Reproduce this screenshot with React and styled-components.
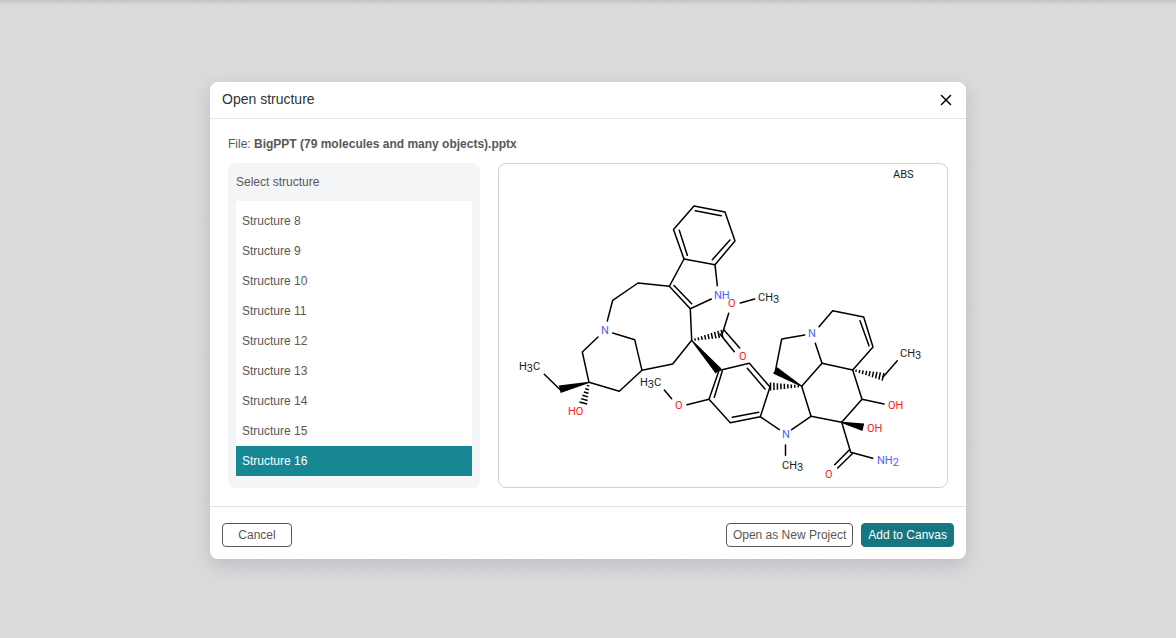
import React, { useState } from "react";
import styled, { createGlobalStyle, css } from "styled-components";

const GlobalStyle = createGlobalStyle`
  *, *::before, *::after { box-sizing: border-box; }
  body {
    margin: 0;
    font-family: "Liberation Sans", Arial, sans-serif;
    font-size: 12px;
    color: #585858;
  }
`;

const Backdrop = styled.main`
  min-height: 100vh;
  padding: 3px 16px 0;
  display: flex;
  align-items: center;
  justify-content: center;
  background:
    linear-gradient(to bottom, rgba(0, 0, 0, 0.1), rgba(0, 0, 0, 0) 6px),
    repeating-linear-gradient(135deg, #dcdcdc 0 5px, #dadada 5px 6px);
`;

const Dialog = styled.section`
  width: 100%;
  max-width: 756px;
  background: #fff;
  border-radius: 8px;
  box-shadow: 0 6px 20px rgba(103, 104, 132, 0.28);
`;

const Header = styled.header`
  display: flex;
  align-items: center;
  justify-content: space-between;
  height: 37px;
  padding: 0 12px 2px;
  border-bottom: 1px solid #e1e5ea;
`;

const Title = styled.h1`
  margin: 0;
  font-size: 14px;
  line-height: 20px;
  font-weight: 400;
  color: #333;
`;

const CloseButton = styled.button`
  display: flex;
  padding: 2px 0 0;
  border: 0;
  background: none;
  color: #000;
  cursor: pointer;
`;

const Body = styled.div`
  padding: 16px 18px 18px;
`;

const FileName = styled.p`
  margin: 0 0 10px;
  line-height: 18px;
`;

const Columns = styled.div`
  display: grid;
  grid-template-columns: 252px minmax(0, 1fr);
  gap: 18px;
`;

const ListPanel = styled.div`
  padding: 10px 8px 12px;
  background: #f4f5f7;
  border-radius: 8px;
`;

const ListTitle = styled.h2`
  margin: 0 0 10px;
  font-size: 12px;
  line-height: 18px;
  font-weight: 400;
`;

const List = styled.ul`
  margin: 0;
  padding: 5px 0 0;
  list-style: none;
  background: #fff;
`;

const ListButton = styled.button`
  display: block;
  width: 100%;
  height: 30px;
  padding: 0 6px;
  border: 0;
  font: inherit;
  text-align: left;
  cursor: pointer;
  color: ${(p) => (p.$selected ? "#fff" : "#585858")};
  background: ${(p) => (p.$selected ? "#188794" : "transparent")};
`;

const Preview = styled.div`
  display: flex;
  border: 1px solid #cad3dd;
  border-radius: 8px;
`;

const Drawing = styled.svg`
  display: block;
  width: 100%;
  height: 323px;
`;

const AtomText = styled.text`
  font-family: Roboto, "Liberation Sans", sans-serif;
  font-size: 11px;
  fill: ${(p) => p.$color};
`;

const Footer = styled.footer`
  display: flex;
  gap: 8px;
  padding: 16px 12px 12px;
  border-top: 1px solid #e1e5ea;
`;

const Button = styled.button`
  height: 24px;
  padding: 0 6px;
  border: 1px solid #585858;
  border-radius: 4px;
  font: inherit;
  color: #585858;
  background: #fff;
  cursor: pointer;
  ${(p) => p.$wide && css`
    min-width: 70px;
    margin-right: auto;
  `}
  ${(p) => p.$primary && css`
    border-color: #167782;
    color: #fff;
    background: #167782;
  `}
`;

const NITROGEN = "#4a63f8";
const OXYGEN = "#ff1a1a";
const CARBON = "#1c1c1c";

const bonds = [
  // indole
  "M185 95L174.500 65.500L195 42L226 48L236 77L216 100.700Z",
  "M180.300 66.200L188.300 91.200M196.300 46.700L222.300 51.700M231 76L213.300 95.700",
  "M185 95L170.300 122.300L191.300 144.700L212.300 135M218.300 121.700L216 100.700",
  "M175 121.500L192.700 139.700",
  // bridged piperidine
  "M170.300 122.300L139 119L113.700 136.300L108.300 157",
  "M113.700 169L135.700 175.700L143 206.300L120.300 227.300L90 218.300L83.300 188L99 173",
  "M143 206.300L173.700 200L192.700 176.300L191.300 144.700",
  "M60.700 225.300L45.300 210.300",
  // methyl ester
  "M223.300 169.700L229.700 149.300M241.300 139L255.700 135M225 166L240.700 184M221 170L235.300 187.700",
  // dihydroindole
  "M220 206.500L250.300 199.300L271 223L261.300 252.700L231.300 258.700L210 235.300Z",
  "M223.300 207L215.300 233.300M248.300 204.300L266 225M259.700 248.300L233.300 253.300",
  "M210 235.300L188 240.700M172.700 234.700L165.300 226",
  "M261.300 252.700L280.300 265.700M292.700 265.700L312 252.300L302.700 222.300M286.500 281V291.300",
  // fused rings
  "M276.500 206.300L282.700 175L305.700 171M316.300 179.300L323 199.300L302.700 222.300",
  "M320 162.700L333.700 146.700L364.700 153L374 183L353.700 206L323 199.300M361 156.700L370 181.700",
  "M353.700 206L363 235.300L342.700 258.300L312 252.300M363 235.300L385 240",
  "M384.300 212.700L398.300 196.700",
  // amide
  "M342.700 258.300L351.700 288.300L373.700 294.300M350 286.300L335.700 300.700M353.300 289.700L338.700 304",
];

// [tip x, tip y, base x, base y]
const wedges = [
  [90, 218.3, 60.7, 225.3],
  [192.7, 176.3, 219.5, 207],
  [302.7, 222.3, 276, 206.3],
  [342.7, 258.3, 364.3, 263.3],
];

const hashes = [
  [90, 218.3, 84.3, 239],
  [192.7, 176.3, 223, 169.7],
  [302.7, 222.3, 271.5, 222.5],
  [353.7, 206, 384, 212.7],
];

function spread([x1, y1, x2, y2], t, half) {
  const length = Math.hypot(x2 - x1, y2 - y1);
  const nx = (-(y2 - y1) / length) * half;
  const ny = ((x2 - x1) / length) * half;
  const x = x1 + (x2 - x1) * t;
  const y = y1 + (y2 - y1) * t;
  return [`${x + nx} ${y + ny}`, `${x - nx} ${y - ny}`];
}

function wedgePath(w) {
  const [a, b] = spread(w, 0, 0.6);
  const [c, d] = spread(w, 1, 3.8);
  return `M${a}L${c}L${d}L${b}Z`;
}

function hashPath(h) {
  const count = Math.round(Math.hypot(h[2] - h[0], h[3] - h[1]) / 3.5);
  return Array.from({ length: count }, (_, i) => {
    const t = (i + 1) / count;
    const [a, b] = spread(h, t, 0.8 + 3.2 * t);
    return `M${a}L${b}`;
  }).join("");
}

const labels = [
  { x: 394, y: 14, text: "ABS" },
  { x: 215, y: 135, text: "NH", color: NITROGEN },
  { x: 229, y: 143, text: "O", color: OXYGEN },
  { x: 259, y: 137, text: "CH", sub: "3" },
  { x: 102, y: 170, text: "N", color: NITROGEN },
  { x: 240, y: 196, text: "O", color: OXYGEN },
  { x: 20, y: 206, text: "H", sub: "3", tail: "C" },
  { x: 69, y: 251, text: "HO", color: OXYGEN },
  { x: 141, y: 222, text: "H", sub: "3", tail: "C" },
  { x: 176, y: 245, text: "O", color: OXYGEN },
  { x: 309, y: 173, text: "N", color: NITROGEN },
  { x: 401, y: 193, text: "CH", sub: "3" },
  { x: 389, y: 245, text: "OH", color: OXYGEN },
  { x: 368, y: 268, text: "OH", color: OXYGEN },
  { x: 283, y: 274, text: "N", color: NITROGEN },
  { x: 283, y: 305, text: "CH", sub: "3" },
  { x: 378, y: 300, text: "NH", sub: "2", color: NITROGEN },
  { x: 326, y: 314, text: "O", color: OXYGEN },
];

function Molecule() {
  return (
    <Drawing viewBox="0 0 448 323" role="img" aria-label="Structure preview">
      <g fill="none" stroke="#000" strokeWidth="1.5" strokeLinecap="round" strokeLinejoin="round">
        {bonds.map((d) => <path key={d} d={d} />)}
      </g>
      {wedges.map((w) => <path key={w.join()} d={wedgePath(w)} />)}
      {hashes.map((h) => <path key={h.join()} d={hashPath(h)} stroke="#000" strokeWidth="1.5" />)}
      {labels.map(({ x, y, text, sub, tail, color = CARBON }) => (
        <AtomText key={`${x}-${y}`} x={x} y={y} $color={color}>
          {text}
          {sub && <tspan dy="2">{sub}</tspan>}
          {tail && <tspan dy="-2">{tail}</tspan>}
        </AtomText>
      ))}
    </Drawing>
  );
}

const structures = [8, 9, 10, 11, 12, 13, 14, 15, 16];

export default function App() {
  const [selected, setSelected] = useState(16);
  return (
    <>
      <GlobalStyle />
      <Backdrop>
        <Dialog role="dialog" aria-labelledby="dialog-title">
          <Header>
            <Title id="dialog-title">Open structure</Title>
            <CloseButton type="button" aria-label="Close">
              <svg width="16" height="16" viewBox="0 0 16 16" fill="none" stroke="currentColor" strokeWidth="1.5" strokeLinecap="round">
                <path d="M3.500 3.500L12.500 12.500M12.500 3.500L3.500 12.500" />
              </svg>
            </CloseButton>
          </Header>
          <Body>
            <FileName>
              File: <b>BigPPT (79 molecules and many objects).pptx</b>
            </FileName>
            <Columns>
              <ListPanel>
                <ListTitle>Select structure</ListTitle>
                <List>
                  {structures.map((n) => (
                    <li key={n}>
                      <ListButton
                        type="button"
                        $selected={n === selected}
                        aria-pressed={n === selected}
                        onClick={() => setSelected(n)}
                      >
                        Structure {n}
                      </ListButton>
                    </li>
                  ))}
                </List>
              </ListPanel>
              <Preview>
                <Molecule />
              </Preview>
            </Columns>
          </Body>
          <Footer>
            <Button type="button" $wide>Cancel</Button>
            <Button type="button">Open as New Project</Button>
            <Button type="button" $primary>Add to Canvas</Button>
          </Footer>
        </Dialog>
      </Backdrop>
    </>
  );
}
